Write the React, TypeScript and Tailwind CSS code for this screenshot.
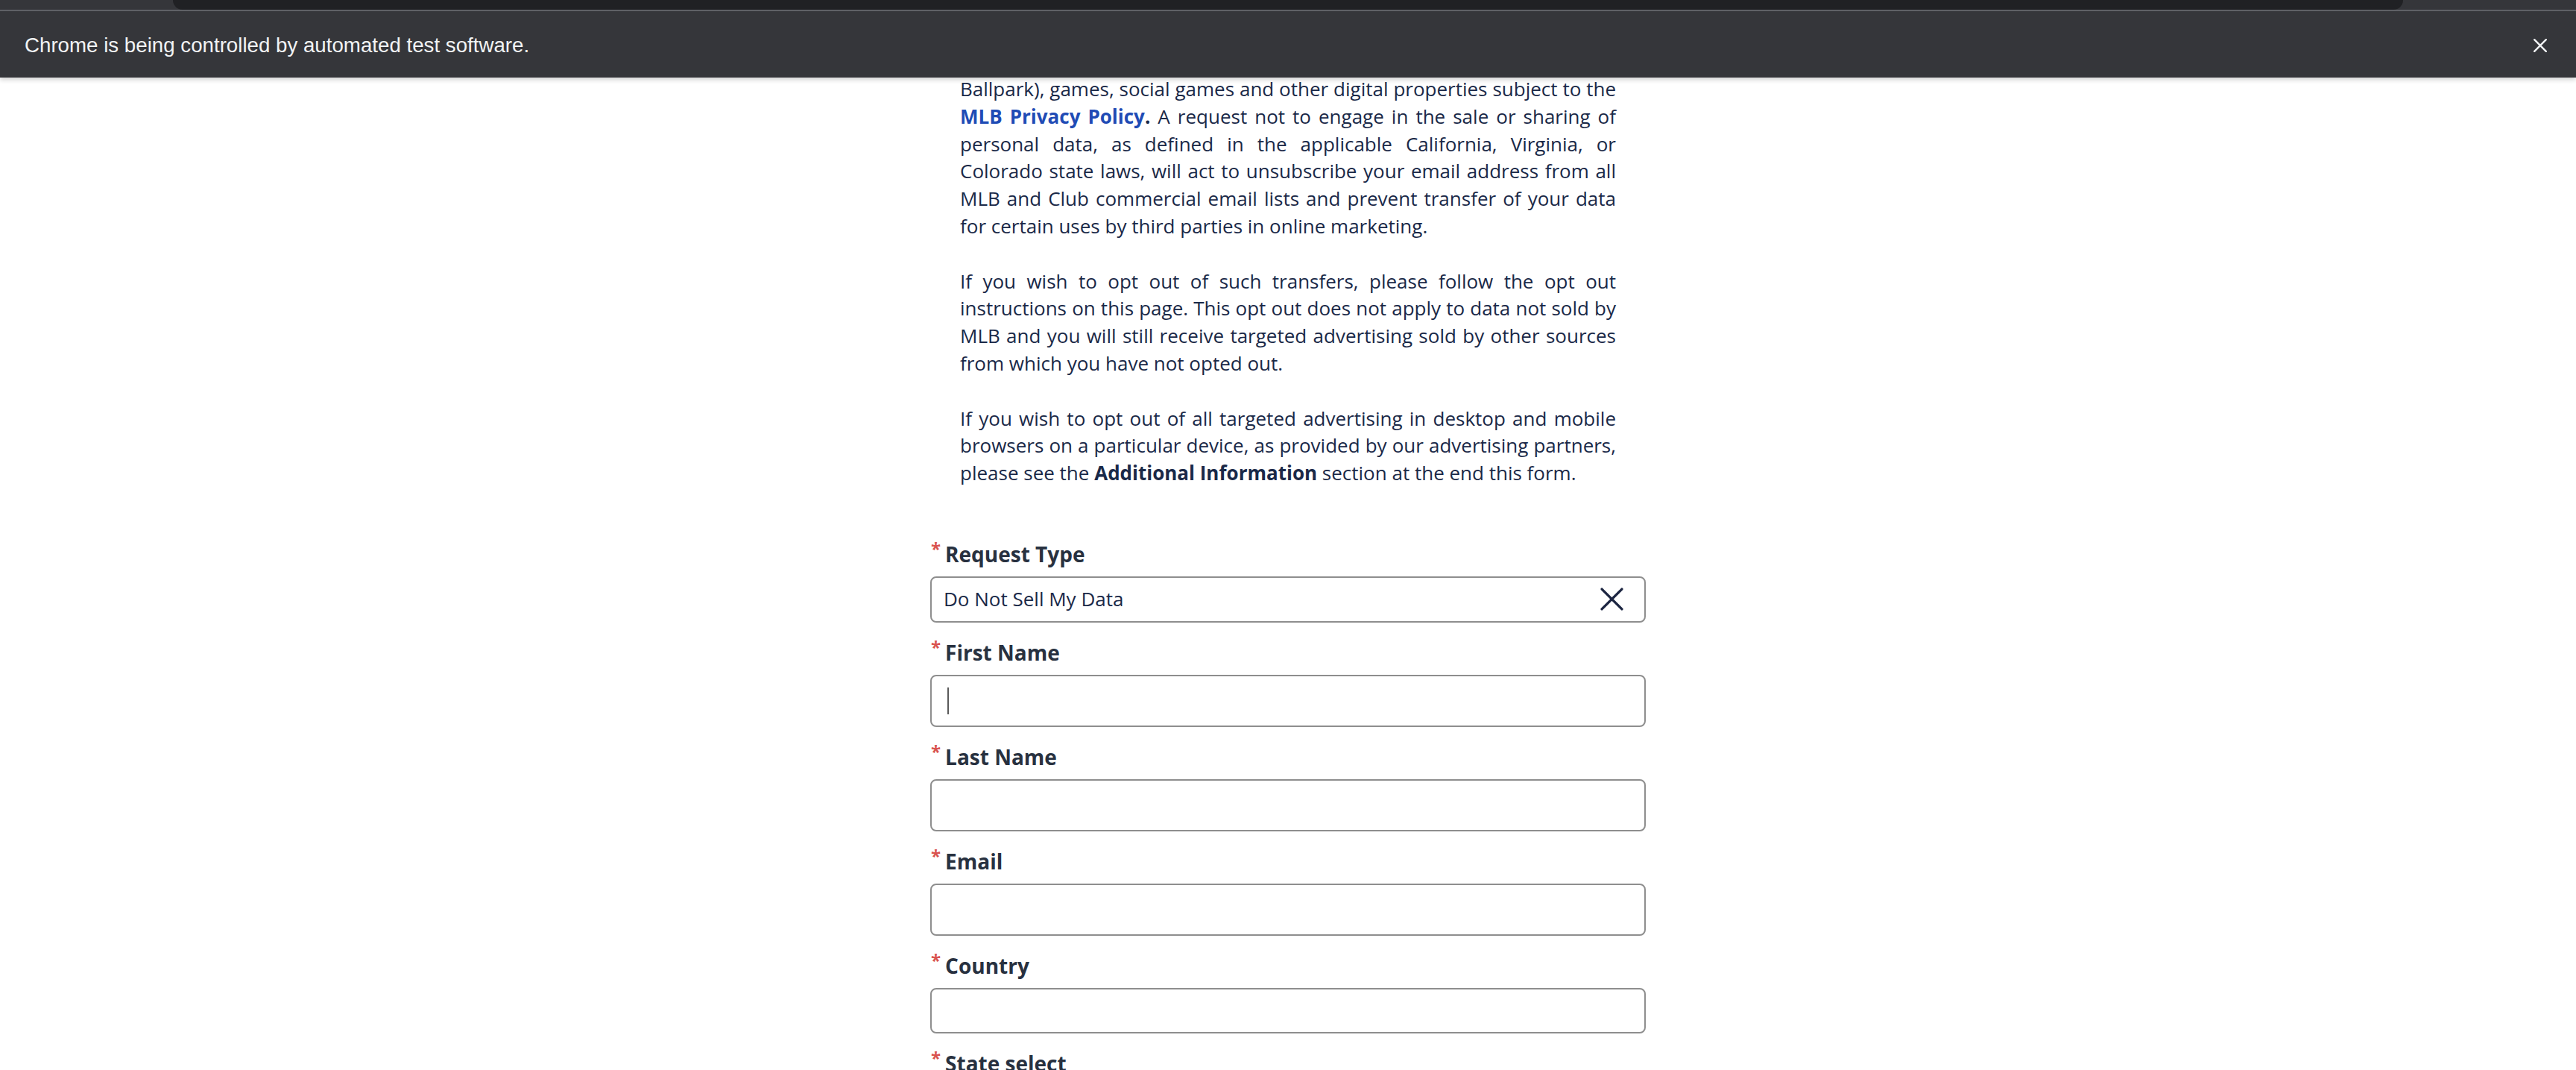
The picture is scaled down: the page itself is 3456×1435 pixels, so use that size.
import React from "react";

const fields = [
  { label: "Request Type", kind: "select", value: "Do Not Sell My Data", h: "h-[62px]" },
  { label: "First Name", kind: "input", cursor: true, h: "h-[70px]" },
  { label: "Last Name", kind: "input", h: "h-[70px]" },
  { label: "Email", kind: "input", h: "h-[70px]" },
  { label: "Country", kind: "input", h: "h-[61px]" },
  { label: "State select", kind: "input", h: "h-[61px]" },
];

function CloseIcon({ size, stroke, color }: { size: number; stroke: number; color: string }) {
  return (
    <svg width={size} height={size} viewBox="0 0 30 30" fill="none">
      <path d="M2 2L28 28M28 2L2 28" stroke={color} strokeWidth={stroke} strokeLinecap="round" />
    </svg>
  );
}

function Field({ field }: { field: (typeof fields)[number] }) {
  return (
    <div className="mt-[22px] first:mt-0">
      <div className="flex h-[36px] items-center pl-[1px]">
        <span className="mr-[6px] -mt-[14px] text-[24px] leading-none font-bold text-[#d9534f]">*</span>
        <span className="text-[28px] font-bold leading-[36px] text-[#283140]">{field.label}</span>
      </div>
      <div
        className={`mt-[12px] flex items-center justify-between rounded-[8px] border-2 border-[#8e8e8e] bg-white px-[16px] ${field.h}`}
      >
        {field.kind === "select" ? (
          <>
            <span className="text-[26px] text-[#1a2948]">{field.value}</span>
            <span className="mr-[12px]">
              <CloseIcon size={31} stroke={3.2} color="#1c2541" />
            </span>
          </>
        ) : field.cursor ? (
          <span className="ml-[5px] h-[36px] w-[2px] bg-[#5a5a5a]" />
        ) : null}
      </div>
    </div>
  );
}

export default function App() {
  return (
    <div className="min-h-screen bg-white" style={{ fontFamily: '"Open Sans", sans-serif' }}>
      <header className="relative z-10 shadow-[0_3px_6px_rgba(0,0,0,0.18)]">
        <div className="h-[13px] bg-[#35363a] px-[232px]">
          <div className="h-full rounded-b-[14px] bg-[#202124]" />
        </div>
        <div className="h-[2px] bg-[#5f6166]" />
        <div
          className="flex h-[89px] items-center justify-between bg-[#35363a] pl-[33px] pr-[39px] pt-[2px] text-[27.7px] text-[#f1f3f4]"
          style={{ fontFamily: '"Liberation Sans", Arial, sans-serif' }}
        >
          <span>Chrome is being controlled by automated test software.</span>
          <CloseIcon size={18} stroke={4} color="#f1f3f4" />
        </div>
      </header>

      <main className="mx-auto -mt-[3px] w-[960px]">
        <div className="mx-auto w-[880px] text-justify text-[26px] leading-[36.8px] text-[#1a2948]">
          <p>
            Ballpark), games, social games and other digital properties subject to the{" "}
            <a className="font-bold text-[#1f4bb5]">MLB Privacy Policy</a>
            <b>.</b> A request not to engage in the sale or sharing of personal data, as defined in the
            applicable California, Virginia, or Colorado state laws, will act to unsubscribe your email
            address from all MLB and Club commercial email lists and prevent transfer of your data for
            certain uses by third parties in online marketing.
          </p>
          <p className="mt-[36.8px]">
            If you wish to opt out of such transfers, please follow the opt out instructions on this page.
            This opt out does not apply to data not sold by MLB and you will still receive targeted
            advertising sold by other sources from which you have not opted out.
          </p>
          <p className="mt-[36.8px]">
            If you wish to opt out of all targeted advertising in desktop and mobile browsers on a
            particular device, as provided by our advertising partners, please see the{" "}
            <b>Additional Information</b> section at the end this form.
          </p>
        </div>

        <form className="mt-[72px] pb-[40px]">
          {fields.map((f) => (
            <Field key={f.label} field={f} />
          ))}
        </form>
      </main>
    </div>
  );
}
